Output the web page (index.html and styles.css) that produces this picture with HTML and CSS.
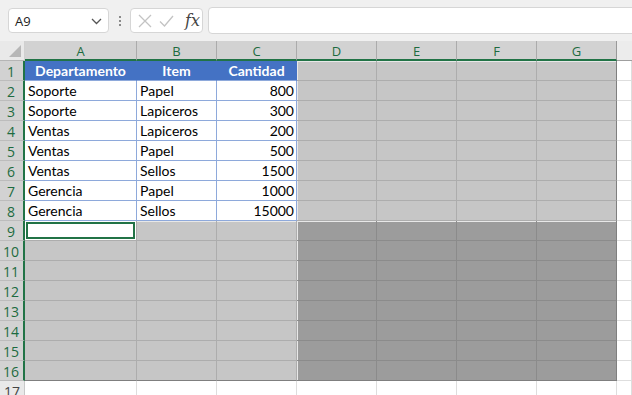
FILE: index.html
```html
<!DOCTYPE html>
<html lang="es">
<head>
    <meta charset="UTF-8">
    <title>Libro1 - Excel</title>
    <link rel="stylesheet" href="styles.css">
</head>
<body>
    <div class="formula-bar">
        <div class="name-box">
            <span>A9</span>
            <svg class="chevron" width="11" height="7" viewBox="0 0 11 7"><path d="M1 1l4.5 4.5L10 1" fill="none" stroke="#555" stroke-width="1.3"/></svg>
        </div>
        <div class="grip"><i></i><i></i><i></i></div>
        <div class="fx-box">
            <svg width="14" height="14" viewBox="0 0 14 14"><path d="M1 1l12 12M13 1L1 13" stroke="#c3c3c3" stroke-width="1.3" fill="none"/></svg>
            <svg width="15" height="12" viewBox="0 0 15 12"><path d="M1 6.5l4.5 4.5L14 1" stroke="#c3c3c3" stroke-width="1.3" fill="none"/></svg>
            <span class="fx">fx</span>
        </div>
        <div class="formula-input"></div>
    </div>

    <div class="sheet">
        <!-- cabecera de columnas -->
        <div class="corner"><b></b></div>
        <div class="col on">A</div><div class="col on">B</div><div class="col on">C</div><div class="col on">D</div>
        <div class="col on">E</div><div class="col on">F</div><div class="col on last">G</div><div class="col rest"></div>

        <div class="row on">1</div>
        <div class="c th">Departamento</div><div class="c th">Item</div><div class="c th">Cantidad</div>
        <div class="c sel eL eT"></div><div class="c sel eT"></div><div class="c sel eT"></div><div class="c sel eT last"></div><div class="c"></div>

        <div class="row on">2</div>
        <div class="c t">Soporte</div><div class="c t">Papel</div><div class="c t num">800</div>
        <div class="c sel eL"></div><div class="c sel"></div><div class="c sel"></div><div class="c sel last"></div><div class="c"></div>

        <div class="row on">3</div>
        <div class="c t">Soporte</div><div class="c t">Lapiceros</div><div class="c t num">300</div>
        <div class="c sel eL"></div><div class="c sel"></div><div class="c sel"></div><div class="c sel last"></div><div class="c"></div>

        <div class="row on">4</div>
        <div class="c t">Ventas</div><div class="c t">Lapiceros</div><div class="c t num">200</div>
        <div class="c sel eL"></div><div class="c sel"></div><div class="c sel"></div><div class="c sel last"></div><div class="c"></div>

        <div class="row on">5</div>
        <div class="c t">Ventas</div><div class="c t">Papel</div><div class="c t num">500</div>
        <div class="c sel eL"></div><div class="c sel"></div><div class="c sel"></div><div class="c sel last"></div><div class="c"></div>

        <div class="row on">6</div>
        <div class="c t">Ventas</div><div class="c t">Sellos</div><div class="c t num">1500</div>
        <div class="c sel eL"></div><div class="c sel"></div><div class="c sel"></div><div class="c sel last"></div><div class="c"></div>

        <div class="row on">7</div>
        <div class="c t">Gerencia</div><div class="c t">Papel</div><div class="c t num">1000</div>
        <div class="c sel eL"></div><div class="c sel"></div><div class="c sel"></div><div class="c sel last"></div><div class="c"></div>

        <div class="row on">8</div>
        <div class="c t">Gerencia</div><div class="c t">Sellos</div><div class="c t num">15000</div>
        <div class="c sel eL"></div><div class="c sel"></div><div class="c sel"></div><div class="c sel last"></div><div class="c"></div>

        <div class="row on">9</div>
        <div class="c sel active"></div><div class="c sel eT"></div><div class="c sel eT"></div>
        <div class="c sel2 eL eT"></div><div class="c sel2 eT"></div><div class="c sel2 eT"></div><div class="c sel2 eT last"></div><div class="c"></div>

        <div class="row on">10</div>
        <div class="c sel"></div><div class="c sel"></div><div class="c sel"></div>
        <div class="c sel2 eL"></div><div class="c sel2"></div><div class="c sel2"></div><div class="c sel2 last"></div><div class="c"></div>

        <div class="row on">11</div>
        <div class="c sel"></div><div class="c sel"></div><div class="c sel"></div>
        <div class="c sel2 eL"></div><div class="c sel2"></div><div class="c sel2"></div><div class="c sel2 last"></div><div class="c"></div>

        <div class="row on">12</div>
        <div class="c sel"></div><div class="c sel"></div><div class="c sel"></div>
        <div class="c sel2 eL"></div><div class="c sel2"></div><div class="c sel2"></div><div class="c sel2 last"></div><div class="c"></div>

        <div class="row on">13</div>
        <div class="c sel"></div><div class="c sel"></div><div class="c sel"></div>
        <div class="c sel2 eL"></div><div class="c sel2"></div><div class="c sel2"></div><div class="c sel2 last"></div><div class="c"></div>

        <div class="row on">14</div>
        <div class="c sel"></div><div class="c sel"></div><div class="c sel"></div>
        <div class="c sel2 eL"></div><div class="c sel2"></div><div class="c sel2"></div><div class="c sel2 last"></div><div class="c"></div>

        <div class="row on">15</div>
        <div class="c sel"></div><div class="c sel"></div><div class="c sel"></div>
        <div class="c sel2 eL"></div><div class="c sel2"></div><div class="c sel2"></div><div class="c sel2 last"></div><div class="c"></div>

        <div class="row on">16</div>
        <div class="c sel bottom"></div><div class="c sel bottom"></div><div class="c sel bottom"></div>
        <div class="c sel2 eL bottom"></div><div class="c sel2 bottom"></div><div class="c sel2 bottom"></div><div class="c sel2 last bottom"></div><div class="c"></div>

        <div class="row">17</div>
        <div class="c"></div><div class="c"></div><div class="c"></div><div class="c"></div>
        <div class="c"></div><div class="c"></div><div class="c"></div><div class="c"></div>
    </div>
</body>
</html>
```

FILE: styles.css
```css
html, body {
    margin: 0;
    height: 100%;
    overflow: hidden;
    background: #fff;
}

body {
    font-family: Lato, "Liberation Sans", sans-serif;
}

/* barra de formulas */
.formula-bar {
    display: flex;
    align-items: center;
    height: 41px;
    padding: 0 0 0 8px;
    box-sizing: border-box;
    background: #f0f0f0;
}

.name-box {
    display: flex;
    align-items: center;
    justify-content: space-between;
    width: 101px;
    height: 25px;
    box-sizing: border-box;
    padding: 0 6px 0 6px;
    background: #fff;
    border: 1px solid #d6d6d6;
    border-radius: 4px;
    font-family: "Open Sans", sans-serif;
    font-size: 13px;
    color: #222;
}

.chevron {
    margin-top: 1px;
}

.grip {
    display: flex;
    flex-direction: column;
    gap: 2px;
    width: 21px;
    align-items: center;
}

.grip i {
    display: block;
    width: 2px;
    height: 2px;
    background: #8a8a8a;
}

.fx-box {
    display: flex;
    align-items: center;
    width: 73px;
    height: 25px;
    box-sizing: border-box;
    padding: 0 0 0 7px;
    gap: 7px;
    background: #fff;
    border: 1px solid #d6d6d6;
    border-radius: 4px;
}

.fx {
    font-family: "DejaVu Serif", "Liberation Serif", serif;
    font-style: italic;
    font-size: 16px;
    color: #444;
    margin-left: 4px;
}

.formula-input {
    flex: 1;
    height: 25px;
    margin: 0 -10px 0 5px;
    background: #fff;
    border: 1px solid #d6d6d6;
    border-radius: 4px;
}

/* hoja */
.sheet {
    display: grid;
    grid-template-columns: 25px 112px repeat(6, 80px) 1fr;
    grid-auto-rows: 20px;
}

.corner {
    position: relative;
    background: #e9e9e9;
    border-right: 1px solid #d0d0d0;
    border-bottom: 1px solid #b5b5b5;
    box-sizing: border-box;
}

.corner b {
    position: absolute;
    right: 3px;
    bottom: 3px;
    width: 0;
    height: 0;
    border-left: 12px solid transparent;
    border-bottom: 12px solid #b7b7b7;
}

.col {
    display: flex;
    align-items: center;
    justify-content: center;
    box-sizing: border-box;
    font-family: "Open Sans", sans-serif;
    font-size: 13px;
    color: #444;
    background: #e9e9e9;
    border-right: 1px solid #ababab;
    border-bottom: 1px solid #ababab;
}

.col.on {
    background: #d2d2d2;
    color: #1d6b40;
    border-bottom: 2px solid #217346;
    padding-top: 1px;
}

.col.last {
    border-right-color: #999;
}

.col.rest {
    background: #ececec;
    border-right: none;
    border-bottom-color: #9f9f9f;
}

.row {
    display: flex;
    align-items: center;
    justify-content: center;
    box-sizing: border-box;
    font-family: "Open Sans", sans-serif;
    font-size: 14px;
    color: #444;
    background: #e9e9e9;
    border-right: 1px solid #c8c8c8;
    border-bottom: 1px solid #d0d0d0;
    padding-top: 1px;
}

.row.on {
    background: #d2d2d2;
    color: #1d6b40;
    border-right: 2px solid #217346;
    border-bottom-color: #bcbcbc;
    padding-right: 1px;
}

/* celdas */
.c {
    box-sizing: border-box;
    padding: 1px 3px 0;
    font-size: 14px;
    line-height: 18px;
    color: #000;
    white-space: nowrap;
    overflow: hidden;
    background: #fff;
    border-right: 1px solid #dedede;
    border-bottom: 1px solid #dedede;
}

.c.t {
    border-color: #8ea9db;
}

.c.num {
    text-align: right;
    padding-right: 2px;
}

.c.th {
    background: #4472c4;
    color: #fff;
    font-weight: bold;
    text-align: center;
    border-right-color: #4472c4;
    border-bottom-color: #8ea9db;
}

.c.sel {
    background: #c6c6c6;
    border-color: #adadad;
}

.c.sel2 {
    background: #9c9c9c;
    border-color: #8b8b8b;
}

.c.last {
    border-right-color: #7f7f7f;
}

.c.bottom {
    border-bottom-color: #7f7f7f;
}

/* bordes claros de los rangos seleccionados */
.c.eL {
    box-shadow: inset 1px 0 0 #e8e8e8;
}

.c.eT {
    box-shadow: inset 0 1px 0 #e8e8e8;
}

.c.eL.eT {
    box-shadow: inset 1px 0 0 #e8e8e8, inset 0 1px 0 #e8e8e8;
}

.c.active {
    background: #fff;
    box-shadow: inset 0 0 0 1px #fff, inset 0 0 0 3px #217346, inset 0 1px 0 #e8e8e8;
}
```
